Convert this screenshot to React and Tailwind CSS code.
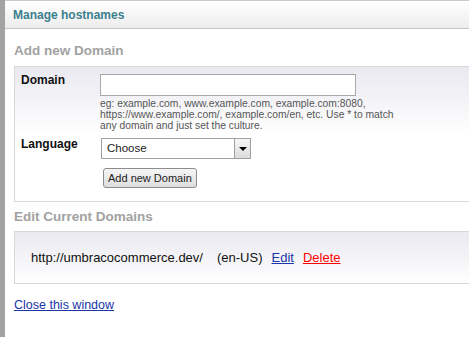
import React, { useState } from "react";

const Hostnames = () => {
  const [domain, setDomain] = useState("");
  const [lang, setLang] = useState("");

  return (
    <div className="w-[469px] h-[337px] overflow-hidden bg-white flex font-['Liberation_Sans',Arial,sans-serif]">
      <div className="w-[5px] shrink-0 bg-[#a3a3a3]" />
      <div className="flex-1 flex flex-col min-w-0">
        <div className="h-[29px] shrink-0 border-t border-[#c8c8c8] border-b border-b-[#c6c6c6] bg-gradient-to-b from-white to-[#ededed] flex items-center pl-[8px]">
          <span className="text-[12px] font-bold text-[#3b7f8e]">Manage hostnames</span>
        </div>

        <div className="pl-[9px] w-[520px]">
          <h2 className="mt-[13px] text-[13.5px] font-bold text-[#a2a2a2] leading-[18px]">Add new Domain</h2>

          <div className="mt-[6px] h-[136px] border border-[#d8d8d8] bg-gradient-to-b from-[#e9e9f0] via-white to-white pl-[6px] pt-[7px] text-[12px]">
            <div className="flex">
              <label className="w-[79px] font-bold text-[12px] leading-[10px] text-[#111] pt-[1px]">Domain</label>
              <div>
                <input
                  value={domain}
                  onChange={(e) => setDomain(e.target.value)}
                  className="w-[256px] h-[22px] border border-[#a8a8a8] bg-white outline-none px-1"
                />
                <p className="mt-[2px] text-[10.3px] leading-[11px] text-[#555] whitespace-nowrap">
                  eg: example.com, www.example.com, example.com:8080,
                  <br />
                  https://www.example.com/, example.com/en, etc. Use * to match
                  <br />
                  any domain and just set the culture.
                </p>
              </div>
            </div>

            <div className="flex mt-[7px]">
              <label className="w-[80px] font-bold text-[12px] leading-[10px] text-[#111] pt-[1px]">Language</label>
              <div className="flex flex-col">
                <div className="relative w-[150px] h-[21px] border border-[#a0a0a0] bg-white flex items-center">
                  <select
                    value={lang}
                    onChange={(e) => setLang(e.target.value)}
                    className="appearance-none w-full h-full pl-[5px] text-[11.5px] text-[#222] bg-transparent outline-none"
                  >
                    <option value="">Choose</option>
                    <option value="en-US">en-US</option>
                  </select>
                  <span className="absolute right-0 top-0 h-full w-[16px] border-l border-[#a0a0a0] bg-gradient-to-b from-[#f7f7f7] to-[#dcdcdc] flex items-center justify-center pointer-events-none">
                    <span className="w-0 h-0 border-l-[4px] border-r-[4px] border-t-[4px] border-l-transparent border-r-transparent border-t-black" />
                  </span>
                </div>
                <button className="mt-[9px] ml-[2px] self-start h-[20px] px-[4px] border border-[#8c8c8c] rounded-[3px] bg-gradient-to-b from-[#f6f6f6] to-[#dedede] text-[11px] text-[#222] leading-none">
                  Add new Domain
                </button>
              </div>
            </div>
          </div>

          <h2 className="mt-[6px] text-[13.5px] font-bold text-[#a2a2a2] leading-[18px]">Edit Current Domains</h2>

          <div className="mt-[5px] h-[53px] border border-[#d8d8d8] bg-gradient-to-b from-[#e9e9f0] to-white flex items-center pl-[16px] text-[13px] text-[#111]">
            <span>http://umbracocommerce.dev/</span>
            <span className="ml-[14px]">(en-US)</span>
            <a href="#" className="ml-[9px] text-[#1a35a8] underline">Edit</a>
            <a href="#" className="ml-[9px] text-[#ff0000] underline">Delete</a>
          </div>

          <a href="#" className="block mt-[12px] text-[12.5px] text-[#1a35a8] underline">Close this window</a>
        </div>
      </div>
    </div>
  );
};

export default function App() {
  return <Hostnames />;
}
